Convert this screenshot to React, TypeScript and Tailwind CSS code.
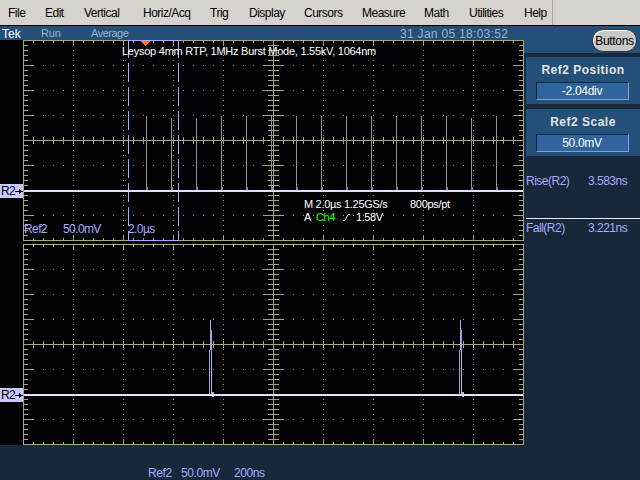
import React from "react";

const GR = "#aaa682";
const DOT = "#96936f";
const LAV = "#aaaaff";
const LINE = "#e0e0ff";

function Graticule() {
  const els: React.ReactNode[] = [];
  const r = (x: number, y: number, w: number, h: number, c: string) =>
    els.push(<rect key={els.length} x={x} y={y} width={w} height={h} fill={c} />);
  for (let k = 1; k < 8; k++) {
    if (k === 4) continue;
    for (let x = 33; x < 523; x += 10) r(x, 25 * k, 1, 1, DOT);
  }
  for (let k = 1; k < 10; k++) {
    if (k === 5) continue;
    for (let y = 5; y < 200; y += 5) r(23 + 50 * k, y, 1, 1, DOT);
  }
  r(23, 0, 501, 1, GR);
  r(23, 200, 501, 1, GR);
  r(23, 0, 1, 201, GR);
  r(523, 0, 1, 201, GR);
  r(23, 100, 501, 1, GR);
  r(273, 0, 1, 201, GR);
  for (let y = 5; y < 200; y += 5) {
    const long = y % 25 === 0;
    r(24, y, long ? 10 : 4, 1, GR);
    r(long ? 513 : 519, y, long ? 10 : 4, 1, GR);
    r(long ? 263 : 268, y, long ? 21 : 11, 1, GR);
  }
  for (let x = 33; x < 523; x += 10) {
    const long = (x - 23) % 50 === 0;
    r(x, 1, 1, long ? 4 : 2, GR);
    r(x, long ? 196 : 198, 1, long ? 4 : 2, GR);
    r(x, 97, 1, 7, GR);
  }
  return <>{els}</>;
}

function TopTrace() {
  const tops: Record<number, number> = { 171: 78, 196: 78, 471: 78 };
  const xs: number[] = [];
  for (let x = 146; x < 520; x += 25) xs.push(x);
  return (
    <>
      <line x1={128.5} y1={0} x2={128.5} y2={200} stroke={LAV} strokeDasharray="19 5" strokeDashoffset="1" />
      <line x1={178.5} y1={0} x2={178.5} y2={200} stroke={LAV} strokeDasharray="19 5" strokeDashoffset="1" />
      <rect x={128} y={0} width={51} height={1} fill={LAV} />
      <rect x={128} y={200} width={51} height={1} fill={LAV} />
      <polygon points="140,1 150,1 145,6" fill="#ff7722" />
      {xs.map((x) => (
        <g key={x}>
          <rect x={x} y={tops[x] ?? 76} width={1} height={74} fill="#94949a" />
          <rect x={x} y={147} width={2} height={3} fill="#8080d0" />
        </g>
      ))}
      <rect x={24} y={150} width={499} height={2} fill={LINE} />
    </>
  );
}

function Pulse({ x }: { x: number }) {
  return (
    <g>
      <rect x={x} y={76} width={1} height={11} fill={LAV} />
      <rect x={x} y={86} width={2} height={20} fill="#a4a4e0" />
      <rect x={x - 1} y={106} width={1} height={44} fill="#a8a8c8" />
      <rect x={x + 1} y={106} width={1} height={44} fill="#b8b8f0" />
      <rect x={x + 2} y={148} width={2} height={5} fill="#b0b0ff" />
    </g>
  );
}

function Scope({ children }: { children: React.ReactNode }) {
  return (
    <svg width={524} height={201} viewBox="0 0 524 201" shapeRendering="crispEdges" className="block">
      <Graticule />
      {children}
    </svg>
  );
}

function R2Tag({ className }: { className: string }) {
  return (
    <div className={`absolute left-0 w-[23px] h-[14px] bg-[#c8c8ff] flex items-center justify-between text-black text-[12px] tracking-[-0.6px] leading-none pl-px ${className}`}>
      <span>R2</span>
      <svg width={8} height={7} viewBox="0 0 8 7" shapeRendering="crispEdges">
        <rect x={0} y={3} width={8} height={1} fill="#000" />
        <rect x={4} y={1} width={1} height={5} fill="#000" />
        <rect x={5} y={2} width={1} height={3} fill="#000" />
      </svg>
    </div>
  );
}

function Knob({ title, value }: { title: string; value: string }) {
  return (
    <div className="ml-[2px] h-[47px] bg-[#234f78] flex flex-col items-center">
      <div className="h-[25px] flex items-center text-[12px] font-bold tracking-[0.5px] text-[#e4e4e4] leading-none">{title}</div>
      <div className="w-[93px] h-[18px] ml-[-2px] flex items-center justify-center border border-t-[#10243a] border-l-[#10243a] border-r-[#7fa0c4] border-b-[#7fa0c4] bg-[#2f659c] bg-[radial-gradient(#1d4468_0.6px,transparent_0.7px)] bg-[size:8px_8px] text-white text-[12px] tracking-[-0.3px] leading-none">
        {value}
      </div>
    </div>
  );
}

const MENU: [string, string][] = [
  ["File", "w-[37px]"],
  ["Edit", "w-[39px]"],
  ["Vertical", "w-[59px]"],
  ["Horiz/Acq", "w-[67px]"],
  ["Trig", "w-[39px]"],
  ["Display", "w-[55px]"],
  ["Cursors", "w-[58px]"],
  ["Measure", "w-[62px]"],
  ["Math", "w-[45px]"],
  ["Utilities", "w-[55px]"],
  ["Help", "w-[28px]"],
];

export default function App() {
  return (
    <div className="w-[640px] h-[480px] overflow-hidden flex flex-col bg-[#16283a] font-['Liberation_Sans',Arial,sans-serif]">
      <div className="h-[26px] shrink-0 bg-[#d6d3ce] border-b border-black flex items-center pl-[8px] text-[12px] tracking-[-0.5px] text-black leading-none">
        {MENU.map(([label, w]) => (
          <div key={label} className={w}>
            {label}
          </div>
        ))}
        <div className="w-px h-[25px] bg-[#aaa8a3]" />
      </div>
      <div className="flex-1 flex">
        <div className="w-[524px] shrink-0 flex flex-col">
          <div className="h-[14px] bg-[#234f78] flex items-center text-[12px] leading-none text-[#9db3c8] pt-px">
            <span className="w-[41px] pl-[2px] text-white">Tek</span>
            <span className="w-[50px] text-[11px] tracking-[-0.2px]">Run</span>
            <span className="w-[309px] text-[11px] tracking-[-0.5px]">Average</span>
            <span className="tracking-[0.3px]">31 Jan 05 18:03:52</span>
          </div>
          <div className="relative h-[405px] bg-[#020204] flex flex-col gap-[3px]">
            <Scope>
              <TopTrace />
            </Scope>
            <Scope>
              <Pulse x={210} />
              <Pulse x={460} />
              <rect x={24} y={150} width={499} height={2} fill={LINE} />
            </Scope>
            <R2Tag className="top-[144px]" />
            <R2Tag className="top-[348px]" />
            <div className="absolute left-[122px] top-[5px] text-white text-[11px] tracking-[-0.25px] leading-[13px] whitespace-nowrap">
              Leysop 4mm RTP, 1MHz Burst Mode, 1.55kV, 1064nm
            </div>
            <div className="absolute left-[24px] top-[183px] text-[#aaaaff] text-[12px] tracking-[-0.6px] leading-[13px] flex whitespace-nowrap">
              <span className="w-[39px]">Ref2</span>
              <span className="w-[65px]">50.0mV</span>
              <span>2.0µs</span>
            </div>
            <div className="absolute left-[304px] top-[158px] text-white text-[11px] tracking-[-0.3px] leading-[13px] flex whitespace-nowrap">
              <span className="w-[106px]">M 2.0µs 1.25GS/s</span>
              <span>800ps/pt</span>
            </div>
            <div className="absolute left-[304px] top-[171px] text-white text-[11px] tracking-[-0.4px] leading-[13px] flex items-center whitespace-nowrap">
              <span className="w-[12px]">A</span>
              <span className="w-[27px] text-[#22ff22]">Ch4</span>
              <svg width={13} height={7} viewBox="0 0 13 7" className="shrink-0">
                <path d="M0 6.5H2L5 0.5H7" fill="none" stroke="#fff" strokeWidth={1} />
              </svg>
              <span>1.58V</span>
            </div>
          </div>
          <div className="flex-1 relative text-[#aaaaff] text-[12px] tracking-[-0.4px] leading-none">
            <div className="absolute left-[148px] bottom-[1px] flex whitespace-nowrap">
              <span className="w-[33px]">Ref2</span>
              <span className="w-[53px]">50.0mV</span>
              <span>200ns</span>
            </div>
          </div>
        </div>
        <div className="flex-1 flex flex-col">
          <div className="h-[27px] bg-[#234f78] flex items-start justify-end pr-[3px] pt-[3px]">
            <div className="w-[45px] h-[23px] rounded-[11px] bg-[#c8c8c8] border border-[#30343a] shadow-[inset_1px_1px_0_#ffffff] flex items-center justify-center text-[12px] tracking-[-0.3px] text-black leading-none">
              Buttons
            </div>
          </div>
          <div className="mt-[4px] flex flex-col gap-[5px]">
            <Knob title="Ref2 Position" value="-2.04div" />
            <Knob title="Ref2 Scale" value="50.0mV" />
          </div>
          <div className="mt-[18px] ml-[2px] h-[14px] flex items-center text-[#aaaaff] text-[12px] tracking-[-0.5px] leading-none">
            <span className="w-[62px]">Rise(R2)</span>
            <span>3.583ns</span>
          </div>
          <div className="mt-[30px] ml-[2px] border-t border-[#e8e8f0] pt-[2px] h-[16px] flex items-center text-[#aaaaff] text-[12px] tracking-[-0.5px] leading-none">
            <span className="w-[62px]">Fall(R2)</span>
            <span>3.221ns</span>
          </div>
        </div>
      </div>
    </div>
  );
}
